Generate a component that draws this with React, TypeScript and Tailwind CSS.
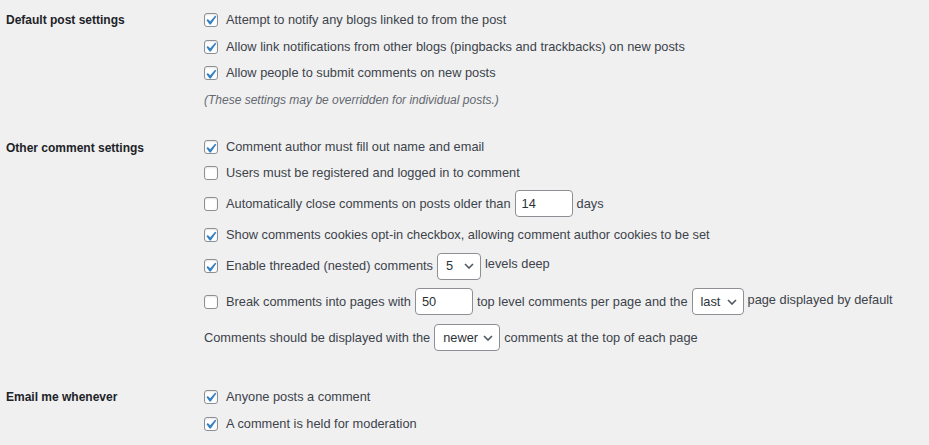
import React from 'react';

function Check({ on }: { on?: boolean }) {
  return (
    <span className="mr-[8px] inline-flex h-[14px] w-[14px] shrink-0 items-center justify-center rounded-[3px] border border-[#8c8f94] bg-white shadow-[inset_0_1px_2px_rgba(0,0,0,0.1)]">
      {on && (
        <svg viewBox="0 0 20 20" className="h-[19px] w-[19px] shrink-0 -translate-x-[1px] translate-y-[1px]">
          <path d="M14.83 4.89l1.34.94-5.81 8.38H9.02L5.78 9.67l1.34-1.25 2.57 2.4z" fill="#3582c4" />
        </svg>
      )}
    </span>
  );
}

function TextBox({ value, w }: { value: string; w: string }) {
  return (
    <span className={`mx-[4px] inline-flex h-[27px] items-center rounded-[4px] border border-[#8c8f94] bg-white px-[6px] text-[#2c3338] ${w}`}>
      {value}
    </span>
  );
}

function Select({ value, w }: { value: string; w: string }) {
  return (
    <span className={`mx-[4px] inline-flex h-[27px] items-center justify-between rounded-[4px] border border-[#8c8f94] bg-white pl-[8px] pr-[6px] text-[#2c3338] ${w}`}>
      <span>{value}</span>
      <svg viewBox="0 0 10 6" className="h-[6px] w-[10px]">
        <polyline points="1,1 5,5 9,1" fill="none" stroke="#50575e" strokeWidth="1.6" />
      </svg>
    </span>
  );
}

function Row({ h, children }: { h: string; children: React.ReactNode }) {
  return <div className={`flex items-center whitespace-nowrap ${h}`}>{children}</div>;
}

function Section({ label, children, className }: { label: string; children: React.ReactNode; className?: string }) {
  return (
    <div className={`flex ${className ?? ''}`}>
      <div className="w-[204px] shrink-0 pl-[6px] pt-[1px] text-[12px] font-bold leading-[27px] text-[#1d2327]">{label}</div>
      <div className="flex flex-col">{children}</div>
    </div>
  );
}

export default function App() {
  return (
    <div className="min-h-[445px] w-[929px] bg-[#f0f0f1] pt-[6px] text-[12.8px] text-[#3c434a] [font-family:'Liberation_Sans',Arial,sans-serif]">
      <Section label="Default post settings">
        <Row h="h-[27px]"><Check on />Attempt to notify any blogs linked to from the post</Row>
        <Row h="h-[27px]"><Check on />Allow link notifications from other blogs (pingbacks and trackbacks) on new posts</Row>
        <Row h="h-[26px]"><Check on />Allow people to submit comments on new posts</Row>
        <div className="mt-[1px] flex h-[26px] items-center text-[12px] italic text-[#646970]">(These settings may be overridden for individual posts.)</div>
      </Section>

      <Section label="Other comment settings" className="mt-[21px]">
        <Row h="h-[26px]"><Check on />Comment author must fill out name and email</Row>
        <Row h="h-[26px]"><Check />Users must be registered and logged in to comment</Row>
        <Row h="h-[35px]">
          <Check />Automatically close comments on posts older than
          <TextBox value="14" w="w-[58px]" />days
        </Row>
        <Row h="h-[28px]"><Check on />Show comments cookies opt-in checkbox, allowing comment author cookies to be set</Row>
        <Row h="h-[34px]">
          <Check on />Enable threaded (nested) comments
          <Select value="5" w="w-[44px]" />
          <span className="mb-[4px]">levels deep</span>
        </Row>
        <Row h="h-[37px]">
          <Check />Break comments into pages with
          <TextBox value="50" w="w-[58px]" />top level comments per page and the
          <Select value="last" w="w-[52px]" />
          <span className="mb-[4px]">page displayed by default</span>
        </Row>
        <Row h="h-[35px]">
          Comments should be displayed with the
          <Select value="newer" w="w-[66px]" />
          comments at the top of each page
        </Row>
      </Section>

      <Section label="Email me whenever" className="mt-[28px]">
        <Row h="h-[27px]"><Check on />Anyone posts a comment</Row>
        <Row h="h-[27px]"><Check on />A comment is held for moderation</Row>
      </Section>
    </div>
  );
}
